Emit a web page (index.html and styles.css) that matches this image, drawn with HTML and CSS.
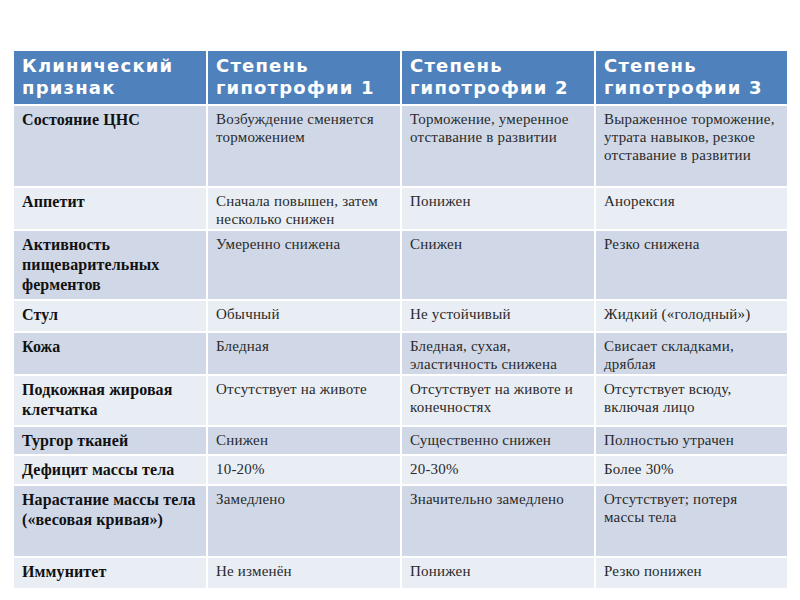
FILE: index.html
```
<!DOCTYPE html>
<html lang="ru">
<head>
<meta charset="utf-8">
<link rel="stylesheet" href="styles.css">
</head>
<body>
<div class="page">
<table class="grid">
<colgroup><col class="c1"><col class="c2"><col class="c3"><col class="c4"></colgroup>
<thead>
<tr class="r-head"><th>Клинический признак</th><th>Степень гипотрофии 1</th><th>Степень гипотрофии 2</th><th>Степень гипотрофии 3</th></tr>
</thead>
<tbody>
<tr class="dark r1"><td class="sign">Состояние ЦНС</td><td>Возбуждение сменяется торможением</td><td>Торможение, умеренное отставание в развитии</td><td>Выраженное торможение, утрата навыков, резкое отставание в развитии</td></tr>
<tr class="light r2"><td class="sign">Аппетит</td><td>Сначала повышен, затем несколько снижен</td><td>Понижен</td><td>Анорексия</td></tr>
<tr class="dark r3"><td class="sign">Активность пищеварительных ферментов</td><td>Умеренно снижена</td><td>Снижен</td><td>Резко снижена</td></tr>
<tr class="light r4"><td class="sign">Стул</td><td>Обычный</td><td>Не устойчивый</td><td>Жидкий («голодный»)</td></tr>
<tr class="dark r5"><td class="sign">Кожа</td><td>Бледная</td><td>Бледная, сухая, эластичность снижена</td><td>Свисает складками, дряблая</td></tr>
<tr class="light r6"><td class="sign">Подкожная жировая клетчатка</td><td>Отсутствует на животе</td><td>Отсутствует на животе и конечностях</td><td>Отсутствует всюду, включая лицо</td></tr>
<tr class="dark r7"><td class="sign">Тургор тканей</td><td>Снижен</td><td>Существенно снижен</td><td>Полностью утрачен</td></tr>
<tr class="light r8"><td class="sign">Дефицит массы тела</td><td>10-20%</td><td>20-30%</td><td>Более 30%</td></tr>
<tr class="dark r9"><td class="sign">Нарастание массы тела («весовая кривая»)</td><td>Замедлено</td><td>Значительно замедлено</td><td>Отсутствует; потеря массы тела</td></tr>
<tr class="light r10"><td class="sign">Иммунитет</td><td>Не изменён</td><td>Понижен</td><td>Резко понижен</td></tr>
</tbody>
</table>
</div>
</body>
</html>
```
FILE: styles.css
```
html, body {
  margin: 0;
  padding: 0;
  background: #ffffff;
}
.page {
  padding: 50px 0 0 13px;
}
.grid {
  border-collapse: separate;
  border-spacing: 0;
  table-layout: fixed;
  width: 775px;
}
.c1 { width: 194px; }
.c2 { width: 194px; }
.c3 { width: 194px; }
.c4 { width: 193px; }
.grid th, .grid td {
  border: 1px solid #ffffff;
  vertical-align: top;
  text-align: left;
  padding: 4px 8px 0 8px;
  overflow: hidden;
}
.grid th {
  background: #4f81bd;
  color: #ffffff;
  font-family: "DejaVu Sans", sans-serif;
  font-weight: bold;
  font-size: 18px;
  letter-spacing: 1.2px;
  line-height: 22px;
  padding-top: 4px;
}
.grid td {
  font-family: "Liberation Serif", serif;
  font-size: 15px;
  letter-spacing: 0.2px;
  line-height: 18px;
  color: #2a2a2a;
}
.grid td.sign {
  font-weight: bold;
  font-size: 16px;
  letter-spacing: 0.1px;
  line-height: 20px;
  color: #111111;
  padding-top: 4px;
}
.dark td { background: #d0d8e8; }
.light td { background: #e9edf4; }
.r-head { height: 55px; }
.r1 { height: 82px; }
.r2 { height: 43px; }
.r3 { height: 70px; }
.r4 { height: 32px; }
.r5 { height: 43px; }
.r6 { height: 51px; }
.r7 { height: 29px; }
.r8 { height: 30px; }
.r9 { height: 72px; }
.r10 { height: 32px; }
```
